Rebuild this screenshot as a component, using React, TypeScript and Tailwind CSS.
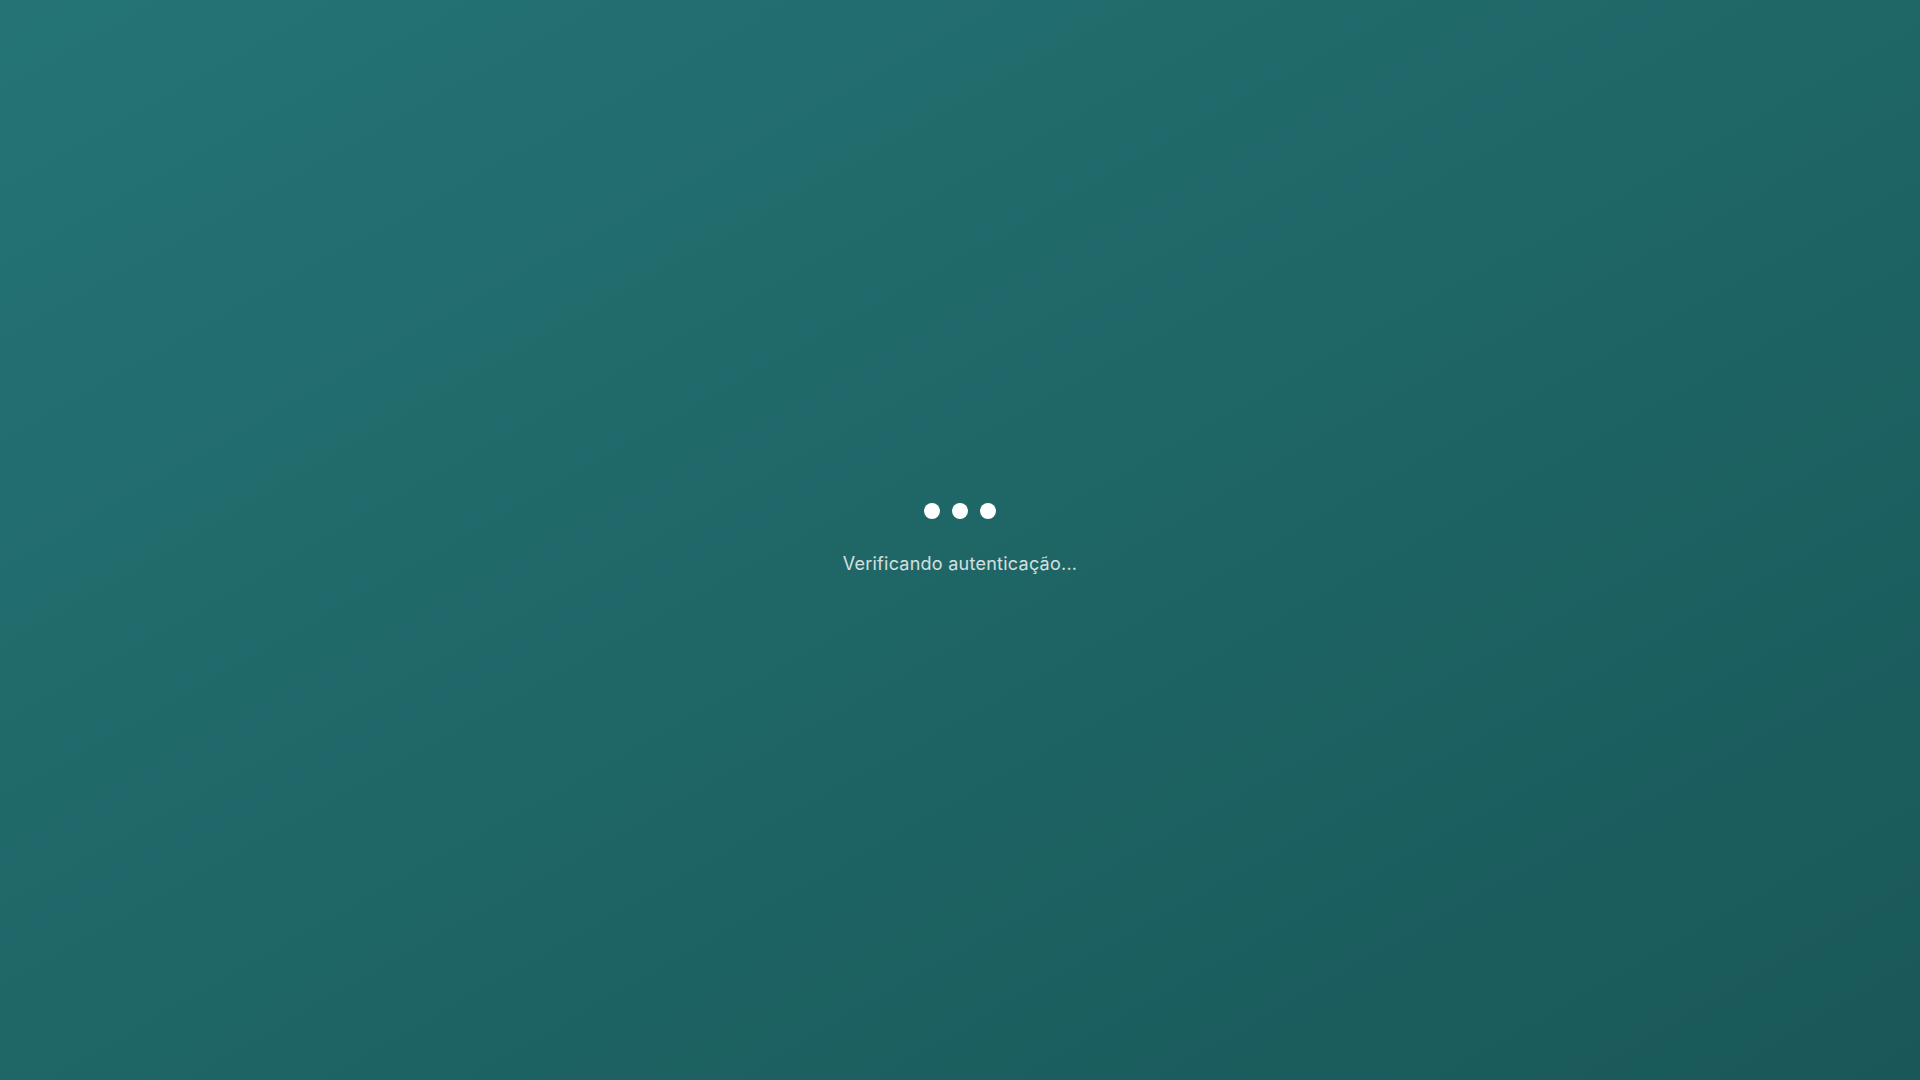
export default function App() {
  return (
    <div
      className="min-h-screen w-full flex flex-col items-center justify-center bg-gradient-to-br from-[#257474] to-[#195859]"
      style={{ fontFamily: 'Inter, "Noto Sans", sans-serif' }}
    >
      <div className="flex items-center gap-3">
        <span className="w-4 h-4 rounded-full bg-white" />
        <span className="w-4 h-4 rounded-full bg-white" />
        <span className="w-4 h-4 rounded-full bg-white" />
      </div>
      <p className="mt-[31px] text-lg leading-7 tracking-[0.25px] text-white/80">Verificando autenticação...</p>
    </div>
  );
}
